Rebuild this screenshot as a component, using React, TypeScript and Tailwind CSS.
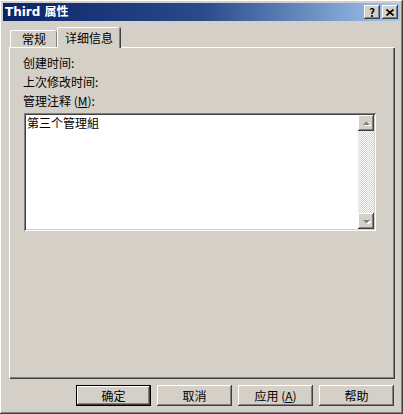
import React from 'react';

const raised =
  'bg-[#d4d0c8] shadow-[inset_-1px_-1px_#404040,inset_1px_1px_#fff,inset_-2px_-2px_#808080,inset_2px_2px_#d4d0c8]';
const sunken =
  'shadow-[inset_1px_1px_#808080,inset_-1px_-1px_#fff,inset_2px_2px_#404040,inset_-2px_-2px_#d4d0c8]';

function TitleButton({ children }: { children: React.ReactNode }) {
  return (
    <div className={`flex h-[14px] w-[16px] items-center justify-center ${raised}`}>{children}</div>
  );
}

function Arrow({ up }: { up?: boolean }) {
  return (
    <div className={`flex h-[16px] w-[16px] items-center justify-center ${raised}`}>
      <svg width="9" height="5" viewBox="0 0 9 5">
        {up ? (
          <>
            <polygon points="2,5 6,1 10,5" fill="#fff" />
            <polygon points="1,4 4.5,0.5 8,4" fill="#808080" />
          </>
        ) : (
          <>
            <polygon points="2,2 6,6 10,2" fill="#fff" />
            <polygon points="1,1 4.5,4.5 8,1" fill="#808080" />
          </>
        )}
      </svg>
    </div>
  );
}

function DlgButton({ children, primary }: { children: React.ReactNode; primary?: boolean }) {
  return (
    <div
      className={`flex h-[21px] w-[75px] items-center justify-center text-[12px] text-black ${
        primary
          ? 'bg-[#d4d0c8] shadow-[inset_0_0_0_1px_#000,inset_-2px_-2px_#404040,inset_2px_2px_#fff,inset_-3px_-3px_#808080]'
          : raised
      }`}
    >
      {children}
    </div>
  );
}

export default function App() {
  return (
    <div
      className={`flex h-[414px] w-[403px] flex-col p-[3px] ${raised}`}
      style={{ fontFamily: '"Noto Sans CJK SC", "DejaVu Sans", sans-serif' }}
    >
      <div className="flex h-[18px] items-center justify-between bg-gradient-to-r from-[#0a246a] via-[#2a4a8a] to-[#a6caf0] pl-[2px] pr-[2px]">
        <span className="font-['DejaVu_Sans','Noto_Sans_CJK_SC',sans-serif] text-[12px] font-bold leading-none text-white">
          Third 属性
        </span>
        <div className="flex gap-[2px]">
          <TitleButton>
            <span className="text-[11px] font-bold leading-none text-black">?</span>
          </TitleButton>
          <TitleButton>
            <svg width="8" height="7" viewBox="0 0 8 7">
              <path d="M0.5 0.5 L7.5 6.5 M7.5 0.5 L0.5 6.5" stroke="#000" strokeWidth="1.6" />
            </svg>
          </TitleButton>
        </div>
      </div>

      <div className="px-[6px] pt-[6px]">
        <div className="flex h-[20px] items-end pl-[1px] text-[12px] text-black">
          <div className="flex h-[17px] w-[47px] items-center justify-center rounded-t-[2px] border-l border-t border-white shadow-[inset_-1px_0_#808080,1px_0_#404040]">
            常规
          </div>
          <div className="relative z-10 -mb-[1px] flex h-[21px] w-[63px] items-center justify-center rounded-t-[2px] border-l border-t border-white bg-[#d4d0c8] pb-[1px] shadow-[inset_-1px_0_#808080,1px_0_#404040]">
            详细信息
          </div>
        </div>
        <div className="h-[331px] border-l border-t border-white px-[13px] pt-[5px] shadow-[inset_-1px_-1px_#808080,1px_1px_#404040]">
          <div className="text-[12px] leading-[19px] text-black">
            <div>创建时间:</div>
            <div>上次修改时间:</div>
            <div>
              管理注释 (<span className="underline">M</span>):
            </div>
          </div>
          <div className={`mt-[3px] ml-[1px] flex h-[118px] w-[352px] bg-white p-[2px] ${sunken}`}>
            <div className="flex-1 pl-[1px] text-[12px] leading-[15px] text-black">第三个管理組</div>
            <div className="flex w-[16px] flex-col">
              <Arrow up />
              <div className="flex-1 bg-[repeating-conic-gradient(#fff_0_25%,#d4d0c8_0_50%)] bg-[length:2px_2px]" />
              <Arrow />
            </div>
          </div>
        </div>
      </div>

      <div className="mt-[7px] flex justify-end gap-[6px] pr-[6px]">
        <DlgButton primary>确定</DlgButton>
        <DlgButton>取消</DlgButton>
        <DlgButton>
          应用 (<span className="underline">A</span>)
        </DlgButton>
        <DlgButton>帮助</DlgButton>
      </div>
    </div>
  );
}
